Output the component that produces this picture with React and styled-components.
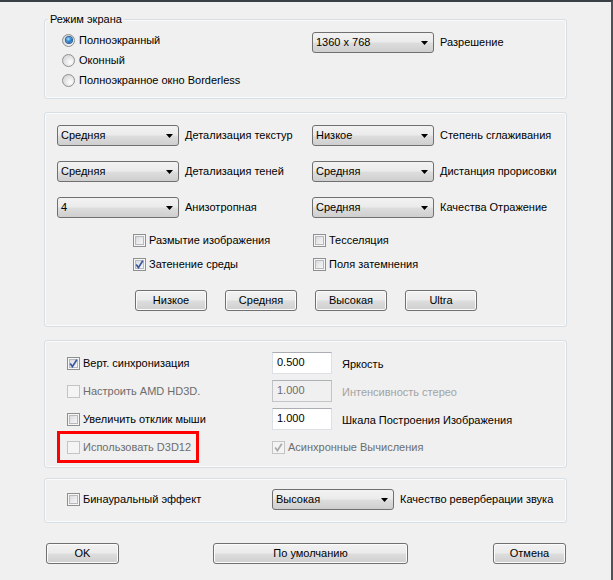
import React from "react";
import styled, { createGlobalStyle, css } from "styled-components";

const GlobalStyle = createGlobalStyle`
  html, body { margin: 0; padding: 0; background: #f0f0f0; }
  body {
    font-family: "Liberation Sans", Arial, sans-serif;
    font-size: 11px;
    color: #000;
  }
  * { box-sizing: border-box; }
`;

const Window = styled.div`
  width: 613px;
  height: 580px;
  background: #f0f0f0;
  border-top: 2px solid #3b4047;
  border-right: 2px solid #4b525b;
  padding: 10px 0 0 44px;
  overflow: hidden;
`;

const groupFrame = css`
  width: 523px;
  border: 1px solid #d5dfe5;
  border-radius: 3px;
  box-shadow: inset 0 0 0 1px #fbfbfb;
`;

const Fieldset = styled.fieldset`
  ${groupFrame};
  margin: 0;
  padding: 4px 0 8px 0;
  min-width: 0;
`;

const Legend = styled.legend`
  margin-left: 3px;
  padding: 0 2px;
  line-height: 14px;
  font-size: 11px;
`;

const Group = styled.div`
  ${groupFrame};
  margin-top: ${(p) => p.$mt}px;
  padding: ${(p) => p.$pad};
`;

const TwoCol = styled.div`
  display: grid;
  grid-template-columns: ${(p) => p.$first}px auto;
  grid-auto-rows: ${(p) => p.$row || "auto"};
  row-gap: ${(p) => p.$gap || 0}px;
  align-items: center;
  padding-left: ${(p) => p.$inset || 0}px;
`;

const Stack = styled.div`
  display: flex;
  flex-direction: column;
`;

const Field = styled.div`
  display: flex;
  align-items: center;
  gap: ${(p) => p.$gap || 6}px;
  align-self: ${(p) => (p.$top ? "start" : "center")};
  margin-top: ${(p) => p.$mt || 0}px;
`;

const Label = styled.span`
  line-height: 13px;
  white-space: nowrap;
  color: ${(p) =>
    p.$tone === "dim" ? "#6d6d6d" : p.$tone === "faint" ? "#a3a3a3" : "#000"};
`;

/* ---------- radio ---------- */
const RadioRow = styled.div`
  display: flex;
  align-items: center;
  gap: 4px;
  height: 20px;
`;

const RadioCircle = styled.span`
  width: 13px;
  height: 13px;
  border-radius: 50%;
  border: 1px solid #8e8f8f;
  background: radial-gradient(circle at 65% 65%, #ffffff 0%, #e6e6e6 45%, #c9ccd1 100%);
  display: flex;
  align-items: center;
  justify-content: center;
  flex: none;
  &::after {
    content: "";
    display: ${(p) => (p.$checked ? "block" : "none")};
    width: 6px;
    height: 6px;
    border-radius: 50%;
    background: radial-gradient(circle at 40% 35%, #a9e3ff 0%, #2f8ad6 45%, #0d3f7f 100%);
    box-shadow: 0 0 0 1px #2b5f94;
  }
`;

const Radio = ({ checked, children }) => (
  <RadioRow>
    <RadioCircle $checked={checked} />
    <Label>{children}</Label>
  </RadioRow>
);

/* ---------- checkbox ---------- */
const CheckRow = styled.label`
  display: flex;
  align-items: center;
  gap: 3px;
  height: 13px;
`;

const Box = styled.span`
  width: 13px;
  height: 13px;
  flex: none;
  display: flex;
  align-items: center;
  justify-content: center;
  border: 1px solid ${(p) => (p.$disabled ? "#c4c4c4" : "#8e8f8f")};
  background: ${(p) =>
    p.$disabled
      ? "#f4f4f4"
      : "linear-gradient(135deg, #cdd0d4 0%, #e7e8ea 45%, #fbfbfb 100%)"};
  box-shadow: ${(p) =>
    p.$disabled ? "none" : "inset 0 0 0 1px #f6f6f6, inset 0 0 0 2px #b6b9be"};
`;

const Check = ({ checked, disabled, tone, children }) => (
  <CheckRow>
    <Box $disabled={disabled}>
      {checked && (
        <svg width="9" height="9" viewBox="0 0 9 9">
          <path
            d="M1.2 4.6 L3.4 7.6 L7.8 0.8"
            fill="none"
            stroke={disabled ? "#a8a8a8" : "#3c55a0"}
            strokeWidth="1.7"
          />
        </svg>
      )}
    </Box>
    <Label $tone={tone}>{children}</Label>
  </CheckRow>
);

/* ---------- combobox ---------- */
const SelectBox = styled.div`
  width: 122px;
  height: 21px;
  flex: none;
  display: flex;
  align-items: center;
  padding: 0 5px 0 3px;
  border: 1px solid #707070;
  border-radius: 3px;
  background: linear-gradient(#f2f2f2 0%, #ebebeb 48%, #dddddd 52%, #cfcfcf 100%);
`;

const SelectValue = styled.span`
  flex: 1;
  line-height: 13px;
  white-space: nowrap;
`;

const Select = ({ value }) => (
  <SelectBox>
    <SelectValue>{value}</SelectValue>
    <svg width="7" height="4" viewBox="0 0 7 4">
      <path d="M0 0 H7 L3.5 4 Z" fill="#000" />
    </svg>
  </SelectBox>
);

/* ---------- buttons ---------- */
const Button = styled.button`
  width: ${(p) => p.$w || 72}px;
  height: 21px;
  margin-left: ${(p) => p.$ml || 0}px;
  padding: 0;
  font: inherit;
  color: #000;
  border: 1px solid #707070;
  border-radius: 3px;
  background: linear-gradient(#f2f2f2 0%, #ebebeb 48%, #dddddd 52%, #cfcfcf 100%);
  box-shadow: inset 0 0 0 1px #fbfbfb;
  line-height: 13px;
`;

const PresetRow = styled.div`
  display: flex;
  gap: 18px;
  margin: 19px 0 0 78px;
`;

const CheckGrid = styled.div`
  display: grid;
  grid-template-columns: 180px 180px;
  row-gap: 11px;
  margin: 16px 0 0 76px;
`;

/* ---------- text input ---------- */
const Input = styled.div`
  width: 60px;
  height: 22px;
  flex: none;
  padding: 3px 0 0 4px;
  line-height: 13px;
  border: 1px solid ${(p) => (p.$disabled ? "#c2c4c7" : "#dbdfe6")};
  border-top-color: ${(p) => (p.$disabled ? "#adb2b5" : "#abadb3")};
  background: ${(p) => (p.$disabled ? "#f0f0f0" : "#fff")};
  color: ${(p) => (p.$disabled ? "#6d6d6d" : "#000")};
`;

const InputLabel = styled(Label)`
  margin-top: 3px;
`;

const Highlight = styled.div`
  display: flex;
  align-items: center;
  width: 142px;
  height: 32px;
  margin: -2px 0 -2px -10px;
  padding-left: 7px;
  border: 3px solid #ff0000;
`;

const Footer = styled.div`
  display: flex;
  margin: 20px 0 0 2px;
`;

export default function App() {
  return (
    <>
      <GlobalStyle />
      <Window>
        <Fieldset>
          <Legend>Режим экрана</Legend>
          <TwoCol $first={250} $inset={17}>
            <Stack>
              <Radio checked>Полноэкранный</Radio>
              <Radio>Оконный</Radio>
              <Radio>Полноэкранное окно Borderless</Radio>
            </Stack>
            <Field $top $mt={2}>
              <Select value="1360 x 768" />
              <Label>Разрешение</Label>
            </Field>
          </TwoCol>
        </Fieldset>

        <Group $mt={13} $pad="12px 0 15px 12px">
          <TwoCol $first={255} $gap={15}>
            <Field>
              <Select value="Средняя" />
              <Label>Детализация текстур</Label>
            </Field>
            <Field>
              <Select value="Низкое" />
              <Label>Степень сглаживания</Label>
            </Field>
            <Field>
              <Select value="Средняя" />
              <Label>Детализация теней</Label>
            </Field>
            <Field>
              <Select value="Средняя" />
              <Label>Дистанция прорисовки</Label>
            </Field>
            <Field>
              <Select value="4" />
              <Label>Анизотропная</Label>
            </Field>
            <Field>
              <Select value="Средняя" />
              <Label>Качества Отражение</Label>
            </Field>
          </TwoCol>
          <CheckGrid>
            <Check>Размытие изображения</Check>
            <Check>Тесселяция</Check>
            <Check checked>Затенение среды</Check>
            <Check>Поля затемнения</Check>
          </CheckGrid>
          <PresetRow>
            <Button>Низкое</Button>
            <Button>Средняя</Button>
            <Button>Высокая</Button>
            <Button>Ultra</Button>
          </PresetRow>
        </Group>

        <Group $mt={13} $pad="8px 0 6px 22px">
          <TwoCol $first={205} $row="28px">
            <Check checked>Верт. синхронизация</Check>
            <Field $gap={10}>
              <Input>0.500</Input>
              <InputLabel>Яркость</InputLabel>
            </Field>
            <Check disabled tone="dim">Настроить AMD HD3D.</Check>
            <Field $gap={10}>
              <Input $disabled>1.000</Input>
              <InputLabel $tone="faint">Интенсивность стерео</InputLabel>
            </Field>
            <Check>Увеличить отклик мыши</Check>
            <Field $gap={10}>
              <Input>1.000</Input>
              <InputLabel>Шкала Построения Изображения</InputLabel>
            </Field>
            <Highlight>
              <Check disabled tone="dim">Использовать D3D12</Check>
            </Highlight>
            <Check checked disabled tone="dim">Асинхронные Вычисления</Check>
          </TwoCol>
        </Group>

        <Group $mt={10} $pad="10px 0 12px 22px">
          <TwoCol $first={205}>
            <Check>Бинауральный эффект</Check>
            <Field>
              <Select value="Высокая" />
              <Label>Качество реверберации звука</Label>
            </Field>
          </TwoCol>
        </Group>

        <Footer>
          <Button $w={73}>OK</Button>
          <Button $w={195} $ml={94}>По умолчанию</Button>
          <Button $w={73} $ml={85}>Отмена</Button>
        </Footer>
      </Window>
    </>
  );
}
